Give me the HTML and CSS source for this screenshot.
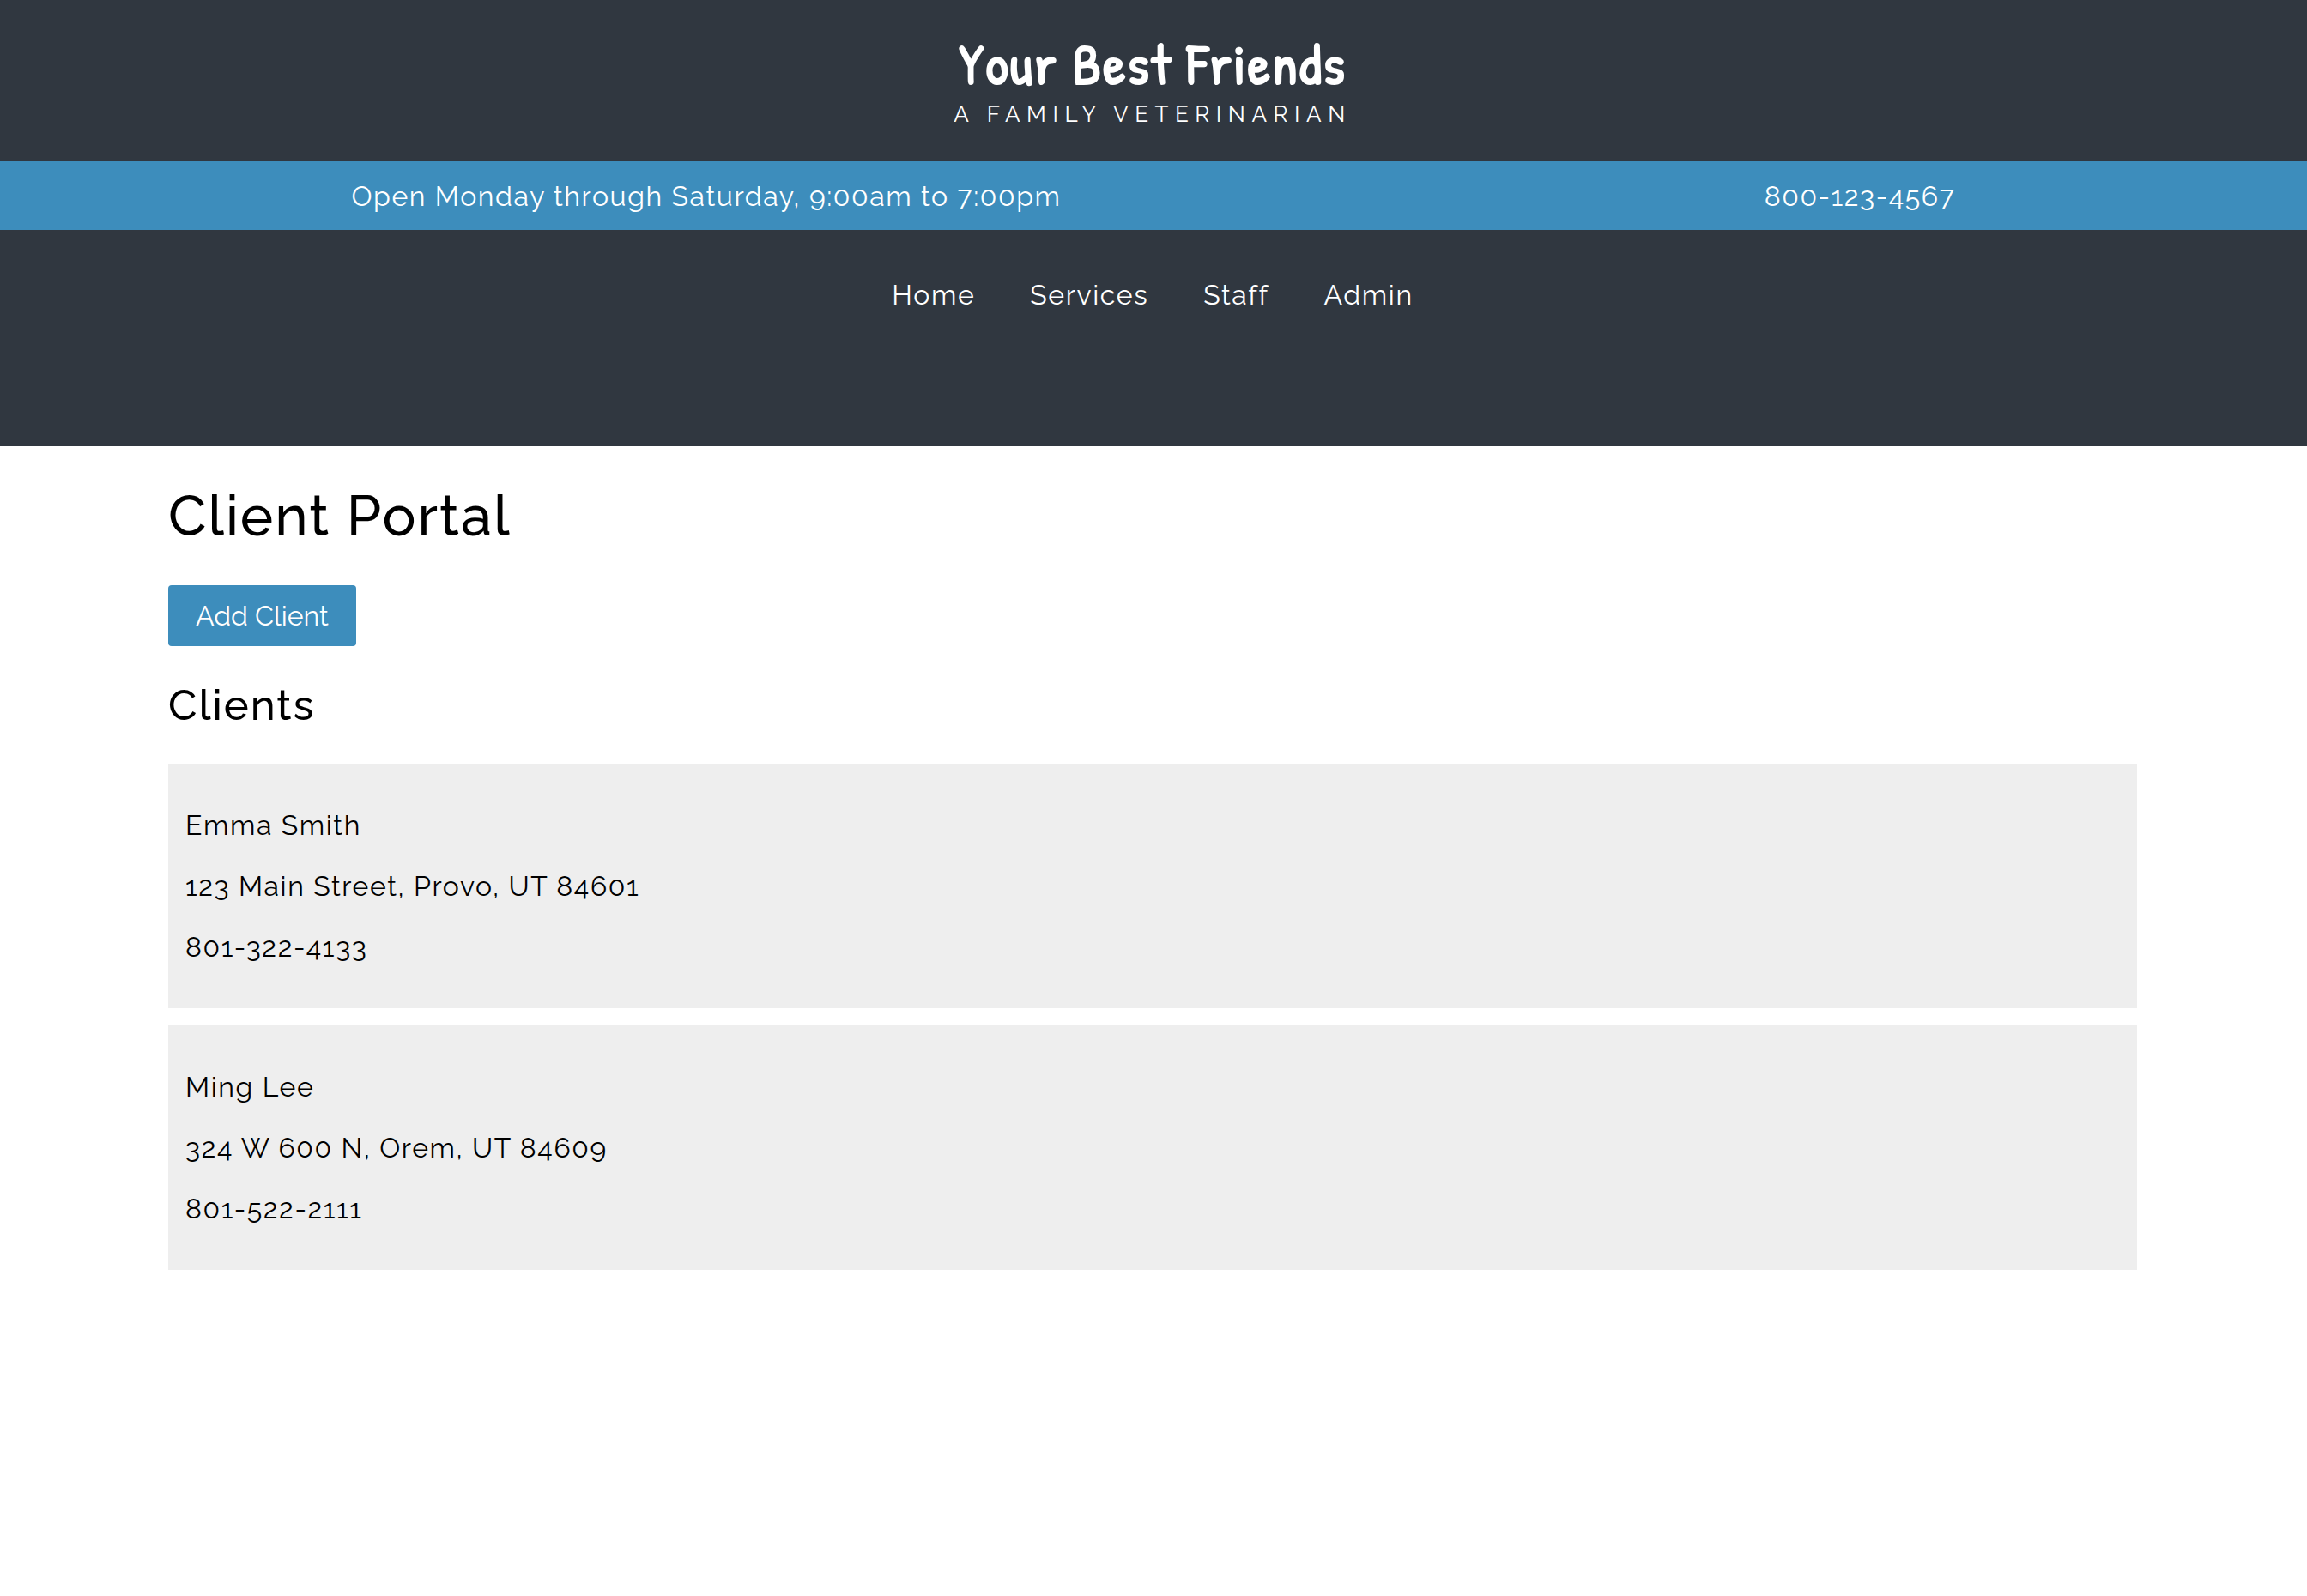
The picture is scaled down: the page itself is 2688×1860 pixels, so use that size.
FILE: index.html
```html
<!DOCTYPE html>
<html lang="en">
<head>
<meta charset="utf-8">
<meta name="viewport" content="width=device-width, initial-scale=1">
<title>Your Best Friends</title>
<link rel="stylesheet" href="styles.css">
</head>
<body>
<header class="site-header">
  <div class="brand">
    <div class="brand-name">Your Best Friends</div>
    <div class="brand-tagline">A FAMILY VETERINARIAN</div>
  </div>
  <div class="info-bar">
    <span>Open Monday through Saturday, 9:00am to 7:00pm</span>
    <span>800-123-4567</span>
  </div>
  <nav class="main-nav">
    <a href="#home">Home</a>
    <a href="#services">Services</a>
    <a href="#staff">Staff</a>
    <a href="#admin">Admin</a>
  </nav>
</header>
<main class="content">
  <h1>Client Portal</h1>
  <button class="add-button" type="button">Add Client</button>
  <h2>Clients</h2>
  <div class="client-list">
    <article class="client">
      <p>Emma Smith</p>
      <p>123 Main Street, Provo, UT 84601</p>
      <p>801-322-4133</p>
    </article>
    <article class="client">
      <p>Ming Lee</p>
      <p>324 W 600 N, Orem, UT 84609</p>
      <p>801-522-2111</p>
    </article>
  </div>
</main>
</body>
</html>
```

FILE: styles.css
```css
* {
  box-sizing: border-box;
}

body {
  margin: 0;
  background: #fff;
  color: #000;
  font-family: Raleway, Lato, sans-serif;
  font-size: 32px;
  font-variant-numeric: oldstyle-nums;
  letter-spacing: 0.05em;
  line-height: 39px;
}

.site-header {
  background: #303740;
  color: #fff;
}

.brand {
  display: flex;
  flex-direction: column;
  align-items: center;
  padding: 36px 2px 34px 0;
}

.brand-name {
  font-family: "Patrick Hand", Lato, sans-serif;
  font-size: 66px;
  font-weight: 700;
  letter-spacing: 2px;
  line-height: 76px;
}

.brand-tagline {
  font-size: 26px;
  letter-spacing: 0.29em;
  line-height: 42px;
}

.info-bar {
  display: flex;
  justify-content: space-around;
  padding: 21px 0 20px;
  background: #3d8dbc;
}

.main-nav {
  display: flex;
  justify-content: center;
  gap: 64px;
  padding: 56px 2px 157px 0;
}

.main-nav a {
  color: inherit;
  text-decoration: none;
}

.content {
  padding: 43px 198px 40px 196px;
}

h1,
h2 {
  font-weight: 500;
  letter-spacing: 2px;
}

h1 {
  margin: 0 0 43px;
  font-size: 65px;
  line-height: 76px;
}

.add-button {
  display: block;
  padding: 16px 32px;
  border: 0;
  border-radius: 4px;
  background: #3d8dbc;
  color: #fff;
  font: inherit;
  letter-spacing: normal;
}

h2 {
  margin: 40px 0;
  font-size: 49px;
  line-height: 57px;
}

.client-list {
  display: grid;
  gap: 20px;
}

.client {
  padding: 20px;
  background: #eee;
}

.client p {
  margin: 32px 0;
}
```
